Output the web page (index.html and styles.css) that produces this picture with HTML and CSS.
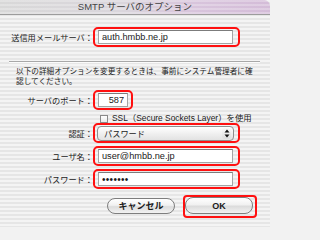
FILE: index.html
```html
<!DOCTYPE html>
<html lang="ja">
<head>
<meta charset="utf-8">
<title>SMTP サーバのオプション</title>
<link rel="stylesheet" href="styles.css">
</head>
<body>
<div class="dialog">
  <div class="titlebar">SMTP サーバのオプション</div>

  <div class="row row-server">
    <span class="lbl">送信用メールサーバ：</span>
    <div class="hl hl-wide"><input class="field" type="text" value="auth.hmbb.ne.jp" readonly></div>
  </div>

  <div class="sep"></div>

  <p class="note">以下の詳細オプションを変更するときは、事前にシステム管理者に確<br>認してください。</p>

  <div class="row row-port">
    <span class="lbl">サーバのポート：</span>
    <div class="hl hl-port"><input class="field field-port" type="text" value="587" readonly></div>
  </div>

  <div class="row row-ssl">
    <span class="check"></span>
    <span class="check-label">SSL（Secure Sockets Layer）を使用</span>
  </div>

  <div class="row row-auth">
    <span class="lbl">認証：</span>
    <div class="hl hl-popup">
      <div class="popup">
        <span class="popup-text">パスワード</span>
        <span class="popup-arrows">
          <svg width="8" height="11" viewBox="0 0 8 11"><path d="M4 1.5 L6.5 4.5 L1.5 4.5 Z" fill="#111"/><path d="M4 9.5 L6.5 6.5 L1.5 6.5 Z" fill="#111"/></svg>
        </span>
      </div>
    </div>
  </div>

  <div class="row row-user">
    <span class="lbl">ユーザ名：</span>
    <div class="hl hl-wide"><input class="field" type="text" value="user@hmbb.ne.jp" readonly></div>
  </div>

  <div class="row row-pass">
    <span class="lbl">パスワード：</span>
    <div class="hl hl-wide"><input class="field field-pass" type="text" value="•••••••" readonly></div>
  </div>

  <div class="buttons">
    <button class="btn btn-cancel" type="button">キャンセル</button>
    <div class="hl-ok"><button class="btn btn-ok" type="button">OK</button></div>
  </div>
</div>
</body>
</html>
```

FILE: styles.css
```css
html, body {
  margin: 0;
  padding: 0;
}

body {
  width: 270px;
  height: 227px;
  overflow: hidden;
  background: #f2f2f2;
}

.dialog {
  width: 270px;
  height: 227px;
  overflow: hidden;
  font-family: "Noto Sans CJK JP", sans-serif;
  color: #1a1a1a;
  background: repeating-linear-gradient(to bottom, #f4f4f4 0, #f4f4f4 2px, #e6e6e6 2px, #e6e6e6 4px);
}

.titlebar {
  height: 14px;
  border-bottom: 1px solid #9c9c9c;
  border-top-right-radius: 6px;
  text-align: center;
  font-family: "Liberation Sans", "Noto Sans CJK JP", sans-serif;
  font-size: 9.5px;
  line-height: 14px;
  color: #444;
  background:
    repeating-linear-gradient(to bottom, rgba(255,255,255,0.25) 0, rgba(255,255,255,0.25) 2px, rgba(255,255,255,0) 2px, rgba(255,255,255,0) 4px),
    linear-gradient(to right, #d8d8d8 0%, #dad6dc 45%, #d8c4dc 72%, #d4bcd8 100%);
}

.row {
  display: flex;
  align-items: center;
}

.lbl {
  width: 93px;
  flex: none;
  text-align: right;
  font-size: 8.2px;
  line-height: 10px;
  white-space: nowrap;
  color: #222;
}

.hl {
  box-sizing: border-box;
  height: 20px;
  border: 2px solid #ff1010;
  border-radius: 5px;
  display: flex;
  align-items: center;
}

.hl-wide {
  width: 147px;
  padding: 0 5px 0 3px;
}

.hl-port {
  width: 40px;
  padding: 0 3px 0 3px;
}

.hl-popup {
  width: 147px;
  padding: 0 4px 0 2px;
}

.field {
  box-sizing: border-box;
  width: 135px;
  height: 14px;
  margin: 0;
  padding: 0 3px;
  border: 1px solid #a4a4a4;
  border-top-color: #7c7c7c;
  background: #fff;
  font-family: "Liberation Sans", "Noto Sans CJK JP", sans-serif;
  font-size: 9.2px;
  color: #1a1a1a;
  outline: none;
}

.field-port {
  width: 30px;
  text-align: right;
}

.field-pass {
  font-size: 10px;
  letter-spacing: 0.3px;
}

.row-server {
  margin-top: 12px;
}

.sep {
  margin: 14px 10px 0 9px;
  height: 0;
  border-top: 1px solid #a8a8a8;
  border-bottom: 1px solid #fbfbfb;
}

.note {
  margin: 3px 0 0 0;
  padding-left: 16px;
  font-size: 7.65px;
  line-height: 10px;
  white-space: nowrap;
  color: #222;
}

.row-port {
  margin-top: 4px;
}

.row-ssl {
  margin-top: 4px;
  height: 9px;
  padding-left: 100px;
}

.check {
  box-sizing: border-box;
  width: 8px;
  height: 8px;
  flex: none;
  border: 1px solid #8a8a8a;
  background: linear-gradient(to bottom, #ffffff, #e9e9e9);
}

.check-label {
  margin-left: 4px;
  font-family: "Liberation Sans", "Noto Sans CJK JP", sans-serif;
  font-size: 8.4px;
  line-height: 9px;
  white-space: nowrap;
  color: #1a1a1a;
}

.row-auth {
  margin-top: 0;
}

.popup {
  box-sizing: border-box;
  width: 137px;
  height: 15px;
  border: 1px solid #8e8e8e;
  border-radius: 4px;
  background: linear-gradient(to bottom, #ffffff 0%, #f0f0f0 50%, #e2e2e2 100%);
  display: flex;
  align-items: center;
  justify-content: space-between;
  padding: 0 2px 0 6px;
}

.popup-text {
  font-size: 8.2px;
  line-height: 10px;
  color: #1a1a1a;
}

.popup-arrows {
  box-sizing: border-box;
  width: 9px;
  height: 11px;
  border-radius: 3px;
  background: linear-gradient(to bottom, #fafafa, #dcdcdc);
  display: flex;
  align-items: center;
  justify-content: center;
}

.row-user {
  margin-top: 3px;
}

.row-pass {
  margin-top: 3px;
}

.buttons {
  margin-top: 6px;
  padding-right: 13px;
  display: flex;
  justify-content: flex-end;
  align-items: center;
  gap: 8px;
}

.hl-ok {
  box-sizing: border-box;
  width: 74px;
  height: 23px;
  border: 2px solid #ff1010;
  border-radius: 4px;
  padding: 0 2px 2px 0;
  display: flex;
}

.btn {
  box-sizing: border-box;
  height: 16px;
  margin: 0;
  padding: 0;
  border: 1px solid #7e7e7e;
  border-radius: 8px;
  background: linear-gradient(to bottom, #ffffff 0%, #f1f1f1 45%, #dcdcdc 55%, #f2f2f2 100%);
  font-family: "Noto Sans CJK JP", sans-serif;
  font-size: 9px;
  font-weight: bold;
  line-height: 14px;
  color: #1a1a1a;
}

.btn-cancel {
  width: 68px;
  margin-top: -2px;
}

.btn-ok {
  width: 68px;
  height: 17px;
  font-family: "Liberation Sans", sans-serif;
}
```
